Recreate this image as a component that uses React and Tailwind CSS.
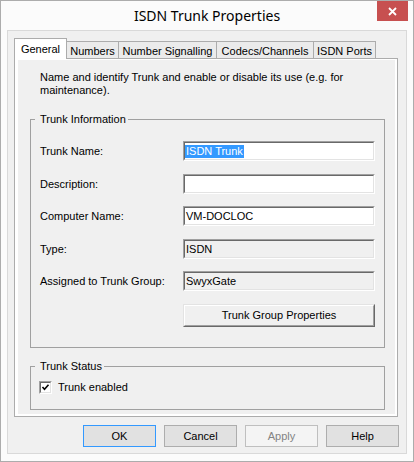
import React from "react";

const ui = "font-['Liberation_Sans',Arial,sans-serif] text-[11px] text-black";

const tabs = [
  { label: "General", w: "w-[53px]", active: true },
  { label: "Numbers", w: "w-[53px]" },
  { label: "Number Signalling", w: "w-[99px]" },
  { label: "Codecs/Channels", w: "w-[98px]" },
  { label: "ISDN Ports", w: "w-[63px]" },
];

const fields = [
  { label: "Trunk Name:", value: "ISDN Trunk", selected: true, mt: "mt-[15px]" },
  { label: "Description:", value: "", mt: "mt-[13px]" },
  { label: "Computer Name:", value: "VM-DOCLOC", mt: "mt-[12px]" },
  { label: "Type:", value: "ISDN", readOnly: true, mt: "mt-[13px]" },
  { label: "Assigned to Trunk Group:", value: "SwyxGate", readOnly: true, mt: "mt-[12px]" },
];

function Field({ value, readOnly, selected }) {
  return (
    <div className="w-[192px] h-[20px] border border-t-[#a0a0a0] border-l-[#a0a0a0] border-r-white border-b-white">
      <div
        className={
          "h-full flex items-center border border-t-[#696969] border-l-[#696969] border-r-[#e3e3e3] border-b-[#e3e3e3] leading-[13px] " +
          (readOnly ? "bg-[#f0f0f0] pl-[1px]" : "bg-white pl-[1px]")
        }
      >
        {selected ? (
          <span className="-ml-[1px] px-[1px] bg-[#3399ff] text-white">{value}</span>
        ) : (
          value
        )}
      </div>
    </div>
  );
}

function DialogButton({ children, primary, disabled }) {
  let tone = "bg-[#e1e1e1] border-[#adadad]";
  if (primary) tone = "bg-[#e1e1e1] border-[#3399ff]";
  if (disabled) tone = "bg-[#f4f4f4] border-[#bfbfbf] text-[#838383]";
  return (
    <button className={"w-[73px] h-[22px] border flex items-center justify-center " + tone}>
      {children}
    </button>
  );
}

function CheckBox() {
  return (
    <span className="w-[13px] h-[13px] border border-t-[#a0a0a0] border-l-[#a0a0a0] border-r-white border-b-white">
      <span className="block w-full h-full bg-white border border-t-[#696969] border-l-[#696969] border-r-[#e3e3e3] border-b-[#e3e3e3]">
        <svg width="9" height="9" viewBox="0 0 9 9" className="block">
          <path d="M1.5 4 L3.5 6.2 L7.5 1.8" fill="none" stroke="#000" strokeWidth="1.6" />
        </svg>
      </span>
    </span>
  );
}

export default function App() {
  return (
    <div className={"w-[414px] h-[462px] flex flex-col border border-[#acacac] bg-[#fbfbfb] " + ui}>
      {/* title bar */}
      <div className="h-[29px] flex">
        <div className="w-[36px]" />
        <div className="flex-1 flex items-center justify-center font-['Noto_Sans',sans-serif] text-[14px] text-black">
          ISDN Trunk Properties
        </div>
        <div className="w-[31px] h-[20px] mr-[5px] bg-[#c75050] flex items-center justify-center">
          <svg width="9" height="9" viewBox="0 0 9 9">
            <path d="M1 1 L8 8 M8 1 L1 8" stroke="#fff" strokeWidth="1.8" />
          </svg>
        </div>
      </div>

      {/* client area */}
      <div className="mx-[6px] h-[424px] flex flex-col border border-[#d9d9d9] bg-[#f0f0f0] pt-[7px]">
        <div className="ml-[6px] h-[20px] flex items-end">
          {tabs.map((t, i) =>
            t.active ? (
              <div
                key={t.label}
                className={t.w + " h-[21px] -mb-[1px] relative z-10 flex justify-center pt-[2px] bg-white border border-b-0 border-[#acacac]"}
              >
                {t.label}
              </div>
            ) : (
              <div
                key={t.label}
                className={t.w + " h-[17px] -ml-[1px] flex justify-center pt-[1px] bg-[#ebebeb] border border-b-0 border-[#acacac]"}
              >
                {t.label}
              </div>
            )
          )}
        </div>

        <div className="ml-[6px] w-[384px] h-[359px] flex border border-[#acacac] bg-white pt-[1px] pl-[3px] pr-[2px] pb-[2px]">
          <div className="flex-1 flex flex-col bg-[#f0f0f0] pt-[11px]">
            <p className="pl-[22px] leading-[13px]">
              Name and identify Trunk and enable or disable its use (e.g. for
              <br />
              maintenance).
            </p>

            <fieldset className="mt-[15px] ml-[12px] w-[355px] border border-[#a0a0a0]">
              <legend className="ml-[4px] pl-[5px] pr-[2px] leading-[14px]">Trunk Information</legend>
              <div className="flex flex-col pl-[9px] pr-[9px] pb-[20px]">
                {fields.map((f) => (
                  <div key={f.label} className={"flex items-center " + f.mt}>
                    <span className="w-[143px]">{f.label}</span>
                    <Field value={f.value} readOnly={f.readOnly} selected={f.selected} />
                  </div>
                ))}
                <div className="mt-[13px] flex">
                  <div className="w-[143px]" />
                  <button className="w-[192px] h-[23px] border border-t-[#e3e3e3] border-l-[#e3e3e3] border-r-[#696969] border-b-[#696969]">
                    <span className="h-full flex items-center justify-center border border-t-white border-l-white border-r-[#a0a0a0] border-b-[#a0a0a0] bg-[#f0f0f0]">
                      Trunk Group Properties
                    </span>
                  </button>
                </div>
              </div>
            </fieldset>

            <fieldset className="mt-[11px] ml-[12px] w-[355px] border border-[#a0a0a0]">
              <legend className="ml-[4px] pl-[5px] pr-[2px] leading-[14px]">Trunk Status</legend>
              <label className="mt-[8px] pl-[8px] pb-[7px] h-[28px] flex items-start gap-[6px]">
                <CheckBox />
                <span className="leading-[13px]">Trunk enabled</span>
              </label>
            </fieldset>
          </div>
        </div>

        <div className="mt-[8px] mr-[7px] flex justify-end gap-[8px]">
          <DialogButton primary>OK</DialogButton>
          <DialogButton>Cancel</DialogButton>
          <DialogButton disabled>Apply</DialogButton>
          <DialogButton>Help</DialogButton>
        </div>
      </div>
    </div>
  );
}
